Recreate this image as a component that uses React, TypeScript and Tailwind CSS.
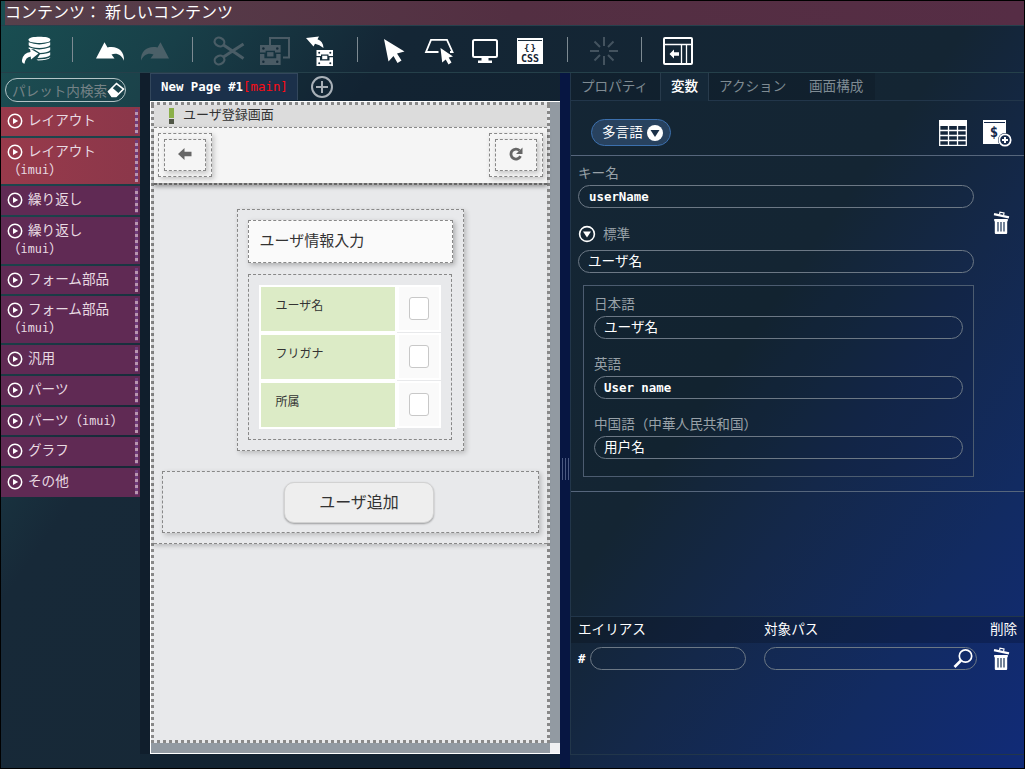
import { ReactNode } from "react";

const palette = [
  { label: "レイアウト", size: "h-[29px]", red: true },
  { label: "レイアウト", sub: true, size: "h-[46px]", red: true },
  { label: "繰り返し", size: "h-[29px]" },
  { label: "繰り返し", sub: true, size: "h-[47px]" },
  { label: "フォーム部品", size: "h-[28px]" },
  { label: "フォーム部品", sub: true, size: "h-[47px]" },
  { label: "汎用", size: "h-[29px]" },
  { label: "パーツ", size: "h-[29px]" },
  { label: "パーツ", inline: true, size: "h-[28px]" },
  { label: "グラフ", size: "h-[29px]" },
  { label: "その他", size: "h-[29px]" },
];

const languages = [
  { name: "日本語", value: "ユーザ名" },
  { name: "英語", value: "User name", latin: true },
  { name: "中国語（中華人民共和国）", value: "用户名" },
];

const Mono = ({ children, bold }: { children: ReactNode; bold?: boolean }) => (
  <span
    className={`font-['DejaVu_Sans_Mono',monospace] text-[12.4px] whitespace-pre ${bold ? "font-bold" : ""}`}
  >
    {children}
  </span>
);

const Imui = () => (
  <>
    （<span className="font-['DejaVu_Sans_Mono',monospace] text-[11.800px]">imui</span>）
  </>
);

// Toolbar icons share one coordinate system, x is the left edge in the bar
const Tool = ({ x, w, children }: { x: number; w: number; children: ReactNode }) => (
  <svg width={w} height={46} viewBox={`${x} 26 ${w} 46`} className="shrink-0" fill="currentColor">
    {children}
  </svg>
);

const Divider = () => <div className="h-[25px] w-px shrink-0 bg-[#7d8a92]" />;

const Trash = () => (
  <svg width="17" height="24" viewBox="0 0 17 24" fill="none" className="shrink-0">
    <path d="M1 3.2 L16 6.4" stroke="#fff" strokeWidth="2.2" />
    <path d="M6.5 3.6 L7 1.2 L11 2 L10.6 4.4" stroke="#fff" strokeWidth="1.2" />
    <path d="M1.2 8h13.6v2.2h-.6V22q0 1-1 1H2.8q-1 0-1-1V10.2h-.6z" fill="#fff" />
    <path d="M5 11v9.5M8 11v9.5M11 11v9.5" stroke="#2c4262" strokeWidth="1.3" />
  </svg>
);

// parts box: lid, base and four rivets
const Chest = () => (
  <g>
    <path d="M0 0h16.500v6H12V4.500H4.500V6H0z" />
    <path d="M0 7.200H3.500V10.500H13V7.200H16.500V16H0z" />
    <path d="M5.700 5.700h5.100v3.500H5.700z" />
    <g fill="#152b39">
      <circle cx="2.700" cy="2.700" r="1" />
      <circle cx="13.800" cy="2.700" r="1" />
      <circle cx="2.700" cy="13.300" r="1" />
      <circle cx="13.800" cy="13.300" r="1" />
    </g>
  </g>
);

const Toolbar = () => (
  <div className="flex h-[46px] items-center text-white">
    <div className="w-[19px] shrink-0" />
    <Tool x={20} w={52}>
      <path d="M28.700 39.300C29 36 50 36 50.200 39.300V40.500C50 43.800 29 43.800 28.700 40.500z" />
      <path d="M28.700 42.300Q39 46.500 50.200 42.300V45.300Q47 48 39.500 48Q31 48 28.700 45.300z" />
      <path d="M28.700 47.300Q39 51.500 50.200 47.300V50.300Q47 53 40 53L34 49.300Q30 49.300 28.700 48.800z" />
      <path d="M40 54.300Q47 54 50.200 52.300V55.300Q47 58 37.500 58z" />
      <path d="M36.500 59.500Q46 59.500 50.200 57.300V57.800Q47 60.500 38 60.500z" />
      <path d="M30 48.500L38.500 53.500L31 59.500L30.700 56.500Q25.500 57 24.500 63.800Q21.500 63 22 60Q23.500 52.500 30.500 52z" />
    </Tool>
    <Divider />
    <Tool x={73} w={60}>
      <path d="M96 58.500L104.500 42.300L107.500 47.500C117 45.500 124.500 50.500 124 60.700C121.500 54.500 116.500 52.500 111.500 54.500L114.500 58.500z" />
    </Tool>
    <Tool x={133} w={59}>
      <path
        fill="#4b6068"
        d="M169 58.500L160.500 42.300L157.500 47.500C148 45.500 140.500 50.500 141 60.700C143.500 54.500 148.500 52.500 153.500 54.500L150.500 58.500z"
      />
    </Tool>
    <Divider />
    <Tool x={193} w={60}>
      <g stroke="#4a5d66" fill="none" strokeWidth="2.200">
        <ellipse cx="219.500" cy="42" rx="5" ry="4.200" transform="rotate(25 219.500 42)" />
        <ellipse cx="219.500" cy="60" rx="5" ry="4.200" transform="rotate(-25 219.500 60)" />
        <path d="M223.500 45L231 50L243.500 58.500M223.500 57L231 52L243.500 44" strokeWidth="3" />
      </g>
    </Tool>
    <Tool x={253} w={46}>
      <g fill="#4a5b65">
        <path d="M270 46V38h19v19.500H283" stroke="#4a5b65" strokeWidth="2" fill="none" />
        <g transform="translate(260 45) scale(1.250)">
          <Chest />
        </g>
      </g>
    </Tool>
    <Tool x={299} w={58}>
      <path d="M306 38L319 36.500L317.500 39.300Q323 41 323.500 48Q319.500 44.500 315 43.700L313.500 46.500z" />
      <g transform="translate(316.500 50)">
        <Chest />
      </g>
    </Tool>
    <Divider />
    <Tool x={358} w={60}>
      <path d="M384 39L404.500 51.500L397 53.500L401.500 60.500L397.500 63L393.500 56L388.500 61.500z" />
    </Tool>
    <Tool x={418} w={47}>
      <path d="M438.500 52H426L431 39.800H447L452.500 52H450" fill="none" stroke="#fff" strokeWidth="1.800" />
      <path d="M440.500 48L453 56.500L448.700 57.500L451.500 62.500L448.500 64.500L445.700 59.500L442.200 62.500z" />
    </Tool>
    <Tool x={465} w={45}>
      <rect x="473" y="40" width="24" height="17" rx="1.500" fill="none" stroke="#fff" strokeWidth="2" />
      <path d="M481.500 57h7v3.500h3.500V63h-14v-2.500h3.500z" />
    </Tool>
    <Tool x={510} w={57}>
      <path d="M517 38h26v26h-26z" />
      <path d="M518 40.500h24" stroke="#1a2c3a" strokeWidth="1" />
      <text
        x="530"
        y="51"
        textAnchor="middle"
        fill="#142433"
        className="font-['DejaVu_Sans_Mono',monospace] text-[9px] font-bold"
        textLength="12"
      >
        {"{}"}
      </text>
      <text
        x="530"
        y="62"
        textAnchor="middle"
        fill="#142433"
        className="font-['DejaVu_Sans_Mono',monospace] text-[10px] font-bold"
        textLength="18"
        lengthAdjust="spacingAndGlyphs"
      >
        CSS
      </text>
    </Tool>
    <Divider />
    <Tool x={568} w={73}>
      <path
        stroke="#44535f"
        strokeWidth="2"
        d="M604 37v9M604 56v9M590 51h9M609 51h9M594.500 41.500l5.500 5.500M608 55l5.500 5.500M594.500 60.500l5.500-5.500M608 47l5.500-5.500"
      />
    </Tool>
    <Divider />
    <Tool x={642} w={60}>
      <g fill="none" stroke="#fff">
        <rect x="664" y="38" width="28" height="26" rx="1" strokeWidth="2" />
        <path d="M664 44.500h28M681.500 44.500V64M686.500 44.500V64" strokeWidth="1.300" />
      </g>
      <path d="M669.500 54L674 49.500V52.300H679V55.700H674V58.500z" />
    </Tool>
  </div>
);

const PlayCircle = () => (
  <svg width="16" height="16" viewBox="0 0 16 16" className="shrink-0">
    <circle cx="8" cy="8" r="6.700" fill="none" stroke="#fff" strokeWidth="1.500" />
    <path d="M6 5L11.200 8L6 11z" fill="#fff" />
  </svg>
);

const Palette = () => (
  <div className="flex w-[139px] shrink-0 flex-col bg-[#ffffff04]">
    <div className="h-[34px] pt-[5px] pl-1">
      <div className="flex h-6 w-[121px] items-center rounded-full border border-[#b4c4c6] pl-1.5">
        <span className="w-[95px] shrink-0 text-[13.600px] leading-[18px] whitespace-nowrap text-[#758286]">
          パレット内検索
        </span>
        <svg width="18" height="16" viewBox="0 0 18 16" className="shrink-0">
          <path d="M1.500 9.500L9.500 1.500L16.500 7L9 14.500H5z" fill="none" stroke="#fff" strokeWidth="1.600" />
          <path d="M1 9.500L5 5.500L12 11.500L9 15H5z" fill="#fff" />
        </svg>
      </div>
    </div>
    <div className="flex flex-col gap-[2px]">
      {palette.map((item, i) => (
        <div
          key={i}
          className={`flex justify-between pr-[2px] pl-1.5 text-[13.600px] leading-[18px] text-[#e8dae2] ${item.size} ${
            item.red ? "bg-linear-to-r from-[#983a4b] to-[#8b374a]" : "bg-[#602a54]"
          }`}
        >
          <div className="pt-[3px]">
            <div className="flex">
              <div className="flex h-[19px] w-[21px] shrink-0 items-end">
                <PlayCircle />
              </div>
              <span className="whitespace-nowrap">
                {item.label}
                {item.inline && <Imui />}
              </span>
            </div>
            {item.sub && (
              <div className="-mt-px whitespace-nowrap">
                <Imui />
              </div>
            )}
          </div>
          <div className="my-[2px] w-[3px] bg-[repeating-linear-gradient(to_bottom,#6f3c7c_0px,#6f3c7c_3px,#b996b0_3px,#b996b0_6px)]" />
        </div>
      ))}
    </div>
  </div>
);

const NavButton = ({ children }: { children: ReactNode }) => (
  <div className="flex h-[44px] w-[54px] border border-dashed border-[#888] p-[5px] shadow-[2px_2px_5px_#0003]">
    <div className="flex flex-1 items-center justify-center border border-dashed border-[#888] pb-0.5 shadow-[2px_2px_5px_#0003]">
      {children}
    </div>
  </div>
);

const dotsX =
  "h-[3px] shrink-0 bg-[repeating-linear-gradient(to_right,#888_0px,#888_3px,transparent_3px,transparent_6px)]";
const dotsY =
  "w-[3px] shrink-0 bg-[repeating-linear-gradient(to_bottom,#888_0px,#888_3px,transparent_3px,transparent_6px)]";

const Screen = () => (
  <div className="flex h-[641px] w-[399px] flex-col bg-[#e8e9eb] text-[#333]">
    <div className={dotsX} />
    <div className="flex flex-1">
      <div className={dotsY} />
      <div className="flex w-[393px] flex-col">
        <div className="flex h-[22px] items-center bg-[#dcdcdc] pl-[15px]">
          <div className="mr-[9px] flex flex-col gap-px">
            <div className="h-2.5 w-[5px] bg-[#8bb04a]" />
            <div className="h-[5px] w-[5px] bg-[#505646]" />
          </div>
          <span className="pb-1 text-[13px] leading-[18px]">ユーザ登録画面</span>
        </div>
        <div className="z-10 flex h-[58px] flex-col justify-between bg-[#f5f5f5] shadow-[0_2px_4px_#0005]">
          <div className="flex flex-1 justify-between border-t border-dashed border-[#888] px-1 pt-[5px]">
            <NavButton>
              <svg width="14" height="12" viewBox="0 0 14 12" fill="#666">
                <path d="M0 6L6.500 0V3.800H13.500V8.200H6.500V12z" />
              </svg>
            </NavButton>
            <NavButton>
              <svg width="14" height="14" viewBox="0 0 14 14">
                <path d="M11.500 9.200A5 5 0 1 1 10.500 3.500" fill="none" stroke="#666" strokeWidth="2.800" />
                <path d="M13.500 .5V7H7z" fill="#666" />
              </svg>
            </NavButton>
          </div>
          <div className="h-[2px] bg-[repeating-linear-gradient(to_right,#666_0px,#666_3px,#a8a8a8_3px,#a8a8a8_5px)]" />
        </div>
        <div className="flex h-[359px] flex-col items-center border-b border-dashed border-[#888] pt-6 shadow-[0_2px_4px_#0003]">
          <div className="mr-[1px] flex h-[242px] w-[227px] flex-col gap-[11px] border border-dashed border-[#888] p-2.5 shadow-[2px_2px_5px_#0003]">
            <div className="flex h-[43px] w-[205px] items-center border border-dashed border-[#888] bg-[#fafafa] pb-0.5 pl-[11px] text-[15px] shadow-[2px_2px_5px_#0004]">
              ユーザ情報入力
            </div>
            <div className="h-[166px] w-[204px] border border-dashed border-[#888] p-2.5">
              {["ユーザ名", "フリガナ", "所属"].map((name) => (
                <div key={name} className="flex h-12">
                  <div className="w-[138px] border-2 border-white bg-white">
                    <div className="h-11 bg-[#dcebc6] pt-[9px] pl-[15px] text-xs leading-[18px]">{name}</div>
                  </div>
                  <div className="flex h-[47px] w-11 items-center justify-center border-2 border-white bg-[#fafafa]">
                    <div className="h-[23px] w-5 rounded-[3px] border border-[#c8c8c8] bg-white" />
                  </div>
                </div>
              ))}
            </div>
          </div>
          <div className="mt-5 flex h-[62px] w-[377px] items-start justify-center border border-dashed border-[#888] pt-2.5 pl-[17px] shadow-[2px_2px_5px_#0003]">
            <div className="flex h-[41px] w-[150px] items-center justify-center rounded-[10px] border border-[#d2d2d2] bg-[#eee] pb-[3px] text-base shadow-[0_1px_2px_#0005]">
              ユーザ追加
            </div>
          </div>
        </div>
      </div>
      <div className={dotsY} />
    </div>
    <div className={dotsX} />
  </div>
);

const Canvas = () => (
  <div className="flex w-[410px] shrink-0 flex-col bg-[#0f1f2d55]">
    <div className="flex h-7 items-start">
      <div className="h-[27px] w-[148px] border border-b-0 border-[#33475c] bg-[#1b304a] pl-2.5 text-[12.400px] leading-[25px] whitespace-nowrap text-white">
        <Mono bold>New Page #1</Mono>
        <span className="text-[#ff0a14]">
          <Mono>[main]</Mono>
        </span>
      </div>
      <svg width="24" height="24" viewBox="0 0 24 24" className="mt-[2px] ml-3" fill="none" stroke="#a9b1b8" strokeWidth="2">
        <circle cx="12" cy="12" r="10" />
        <path d="M12 6v12M6 12h12" />
      </svg>
    </div>
    <div className="flex h-[653px] flex-col border-t border-b border-l border-white bg-[#929aa2]">
      <Screen />
      <div className="flex flex-1 justify-end">
        <div className="w-2.5 bg-[#f0f1f3]" />
      </div>
    </div>
  </div>
);

const Field = ({ children, className = "" }: { children?: ReactNode; className?: string }) => (
  <div
    className={`flex h-[23px] shrink-0 items-center rounded-full border border-[#6c7885] text-[13.600px] leading-[18px] text-white ${className}`}
  >
    {children}
  </div>
);

const Variables = () => (
  <div className="flex h-[336px] border-b border-[#56667c] pl-[7px]">
    <div className="w-[396px]">
      <div className="h-[29px] pt-[7px] text-[13.600px] leading-[19px] text-[#98a1a8]">キー名</div>
      <Field className="pt-px pl-2.5">
        <Mono bold>userName</Mono>
      </Field>
      <div className="flex h-[42px] items-center pt-2.5 text-[13.600px] text-[#98a1a8]">
        <svg width="18" height="18" viewBox="0 0 18 18" className="mr-[7px]">
          <circle cx="9" cy="9" r="7.400" fill="none" stroke="#fff" strokeWidth="1.600" />
          <path d="M5 6.500H13L9 12.500z" fill="#fff" />
        </svg>
        <span className="pb-0.5">標準</span>
      </div>
      <Field className="pb-[3px] pl-[9px]">ユーザ名</Field>
      <div className="mt-3 ml-[5px] h-[192px] border border-[#4c5c70] bg-[#0000000d] px-2.5 pt-[8px]">
        {languages.map((lang) => (
          <div key={lang.name} className="h-[60px]">
            <div className="h-[22px] text-[13.600px] leading-[18px] text-[#98a1a8]">{lang.name}</div>
            <Field className={lang.latin ? "pl-[9px]" : "pb-[3px] pl-[9px]"}>
              {lang.latin ? <Mono bold>{lang.value}</Mono> : lang.value}
            </Field>
          </div>
        ))}
      </div>
    </div>
    <div className="pt-[55px] pl-[19px]">
      <Trash />
    </div>
  </div>
);

const Inspector = () => (
  <div className="flex h-[682px] w-[454px] flex-col border-b border-l border-[#22364a]">
    <div className="flex h-[27px] shrink-0 text-[13.600px] text-[#7f8b93]">
      <div className="flex w-[304px] shrink-0 bg-[#0000001c]">
        <div className="flex w-[89px] items-center pb-[3px] pl-2.5">プロパティ</div>
        <div className="z-10 -mb-px flex w-[49px] items-center justify-center border-x border-[#283b4c] bg-[#152838] pb-1 font-medium text-white">
          変数
        </div>
        <div className="flex w-[90px] items-center pb-[3px] pl-2.5">アクション</div>
        <div className="flex items-center pb-[3px] pl-2.5">画面構成</div>
      </div>
    </div>
    <div className="flex h-[56px] shrink-0 items-center justify-between border-t border-b border-t-[#22364a] border-b-[#56667c] pr-3 pl-5">
      <div className="mb-[-9px] flex h-[27px] w-20 items-center rounded-full border border-[#3c70ae] bg-[#28425f] pl-2.5 text-[13.600px] text-white">
        <span className="pb-0.5">多言語</span>
        <svg width="18" height="18" viewBox="0 0 18 18" className="ml-[3px]">
          <circle cx="9" cy="9" r="8" fill="#fff" />
          <path d="M4.500 6H13.500L9 13z" fill="#1b3048" />
        </svg>
      </div>
      <div className="mb-[-10px] flex gap-[15px]">
        <svg width="29" height="28" viewBox="0 0 29 28">
          <path d="M1 1h28v6H1z" fill="#fff" />
          <path d="M1.700 1.500V26.300H28.300V1.500M1.700 11.500H28.300M1.700 16.500H28.300M1.700 21.500H28.300M10.500 6V26M19.500 6V26" stroke="#fff" strokeWidth="1.300" fill="none" />
        </svg>
        <svg width="30" height="28" viewBox="0 0 30 28">
          <path d="M1 1h23v24H1z" fill="#fff" />
          <path d="M2 3.500h21" stroke="#14284a" />
          <text x="12" y="18" textAnchor="middle" fill="#14284a" className="font-['DejaVu_Sans_Mono',monospace] text-[14px] font-bold">
            $
          </text>
          <circle cx="23" cy="21" r="7" fill="#14284a" />
          <circle cx="23" cy="21" r="5.700" fill="none" stroke="#fff" strokeWidth="1.700" />
          <path d="M23 18v6M20 21h6" stroke="#fff" strokeWidth="2" />
        </svg>
      </div>
    </div>
    <Variables />
    <div className="h-[124px]" />
    <div className="flex h-[27px] items-center border-t border-[#22364a] bg-[#00000030] pb-[3px] pl-[7px] text-[13.600px] text-white">
      <span className="w-[186px]">エイリアス</span>
      <span className="w-[226px]">対象パス</span>
      <span className="whitespace-nowrap">削除</span>
    </div>
    <div className="flex pt-1 pl-[7px] text-white">
      <div className="flex w-3 items-center">
        <Mono bold>#</Mono>
      </div>
      <Field className="w-[156px]" />
      <Field className="ml-[18px] w-[213px] justify-end pr-[2px]">
        <svg width="21" height="21" viewBox="0 0 21 21" fill="none" stroke="#fff">
          <circle cx="12.500" cy="8" r="6.200" strokeWidth="1.700" />
          <path d="M8 12.500L1.500 19" strokeWidth="2.600" />
        </svg>
      </Field>
      <div className="ml-[16px]">
        <Trash />
      </div>
    </div>
  </div>
);

const App = () => {
  return (
    <div className="h-[769px] w-[1025px] overflow-hidden border border-black bg-[linear-gradient(125deg,#194f52_0%,#183f48_13%,#142635_27%,#142533_63%,#14284a_74%,#122b62_87%,#112b78_100%)] font-['Noto_Sans_CJK_JP',sans-serif]">
      <div className="h-[25px] border-b border-[#27404c] pl-1 text-base text-white">
        <div className="h-6 bg-linear-to-r from-[#57404b] via-[#532f42] to-[#562d45] leading-5 whitespace-pre">
          コンテンツ：<span className="pl-1">新しいコンテンツ</span>
        </div>
      </div>
      <Toolbar />
      <div className="flex h-[696px] border-t border-[#25404a]">
        <Palette />
        <div className="h-[681px] w-2.5 shrink-0 bg-[#101e2c]" />
        <Canvas />
        <div className="flex w-2.5 shrink-0 justify-center gap-[2px] bg-[#071642] pt-[385px]">
          <div className="h-[22px] w-px bg-[#4a5880]" />
          <div className="h-[22px] w-px bg-[#4a5880]" />
          <div className="h-[22px] w-px bg-[#4a5880]" />
        </div>
        <Inspector />
      </div>
    </div>
  );
};

export default App;
